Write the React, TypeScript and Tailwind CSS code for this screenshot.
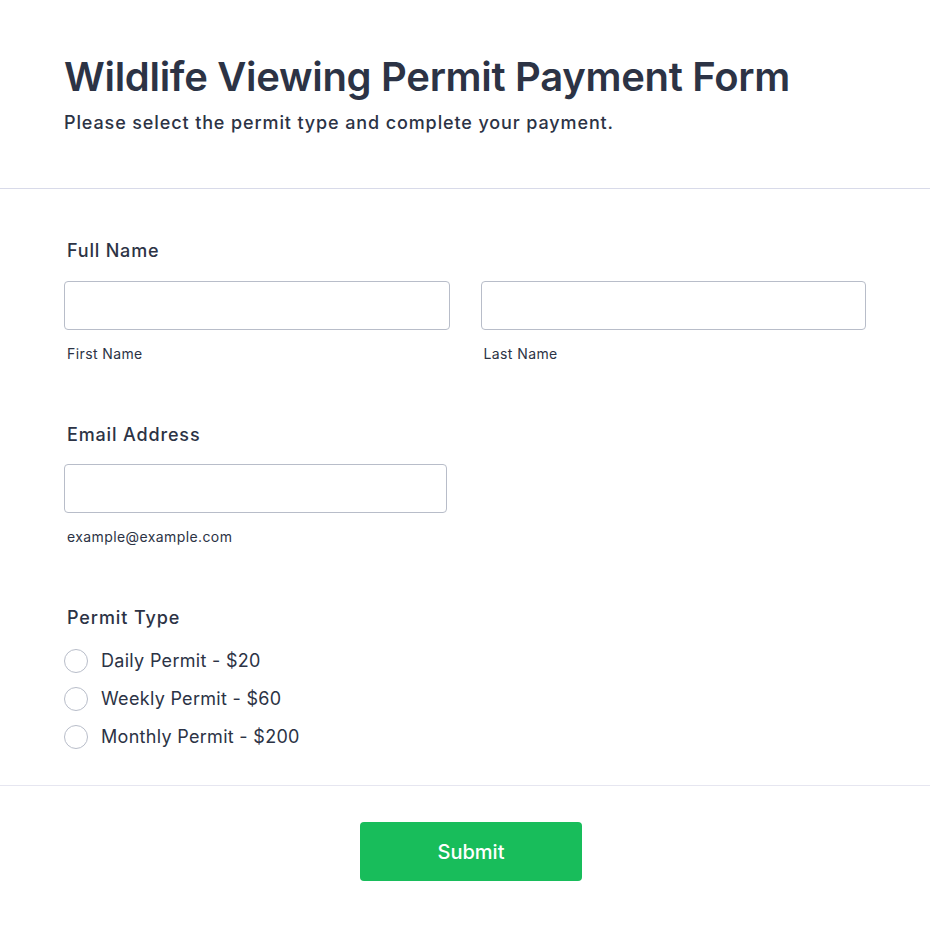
import React from 'react';

const permits = [
  { id: 'daily', label: 'Daily Permit - $20' },
  { id: 'weekly', label: 'Weekly Permit - $60' },
  { id: 'monthly', label: 'Monthly Permit - $200' },
];

function TextInput({ className = '' }: { className?: string }) {
  return (
    <input
      type="text"
      className={`h-[49px] rounded border border-[#b8bdc9] bg-white px-3 text-base outline-none ${className}`}
    />
  );
}

export default function App() {
  return (
    <div className="min-h-screen bg-white text-[#2c3345]" style={{ fontFamily: 'Inter, "Noto Sans", sans-serif' }}>
      {/* Header */}
      <div className="border-b border-[#d8dae9] px-16 pt-[53px] pb-[52px]">
        <h1 className="text-[40px] font-semibold leading-[48px] tracking-[-0.3px]">
          Wildlife Viewing Permit Payment Form
        </h1>
        <p className="mt-[9px] text-[18px] font-medium leading-[26px] tracking-[0.88px]">
          Please select the permit type and complete your payment.
        </p>
      </div>

      {/* Fields */}
      <div className="px-16 pt-[49px] pb-[36px]">
        <div>
          <label className="block pl-[3px] text-[18px] font-medium leading-[26px] tracking-[0.8px]">Full Name</label>
          <div className="mt-[17px] grid grid-cols-2 gap-[31px]">
            <div>
              <TextInput className="w-full" />
              <div className="mt-[14px] pl-[3px] text-[14px] leading-[20px] tracking-[0.4px]">First Name</div>
            </div>
            <div>
              <TextInput className="w-full" />
              <div className="mt-[14px] pl-[3px] text-[14px] leading-[20px] tracking-[0.4px]">Last Name</div>
            </div>
          </div>
        </div>

        <div className="mt-[58px]">
          <label className="block pl-[3px] text-[18px] font-medium leading-[26px] tracking-[0.85px]">Email Address</label>
          <TextInput className="mt-[16px] w-[383px]" />
          <div className="mt-[14px] pl-[3px] text-[14px] leading-[20px] tracking-[0.4px]">example@example.com</div>
        </div>

        <div className="mt-[58px]">
          <label className="block pl-[3px] text-[18px] font-medium leading-[26px] tracking-[0.9px]">Permit Type</label>
          <div className="mt-[18px] flex flex-col gap-[14px]">
            {permits.map((p) => (
              <label key={p.id} className="flex items-center gap-[13px]">
                <span className="h-[24px] w-[24px] rounded-full border border-[#b8bdc9] bg-white" />
                <span className="text-[18px] leading-[24px] tracking-[0.3px]">{p.label}</span>
              </label>
            ))}
          </div>
        </div>
      </div>

      {/* Footer */}
      <div className="flex justify-center border-t border-[#e6e6f0] pt-[36px] pb-[50px] pl-[12px]">
        <button className="h-[59px] w-[222px] rounded bg-[#18bd5b] text-[20px] font-medium text-white">
          Submit
        </button>
      </div>
    </div>
  );
}
